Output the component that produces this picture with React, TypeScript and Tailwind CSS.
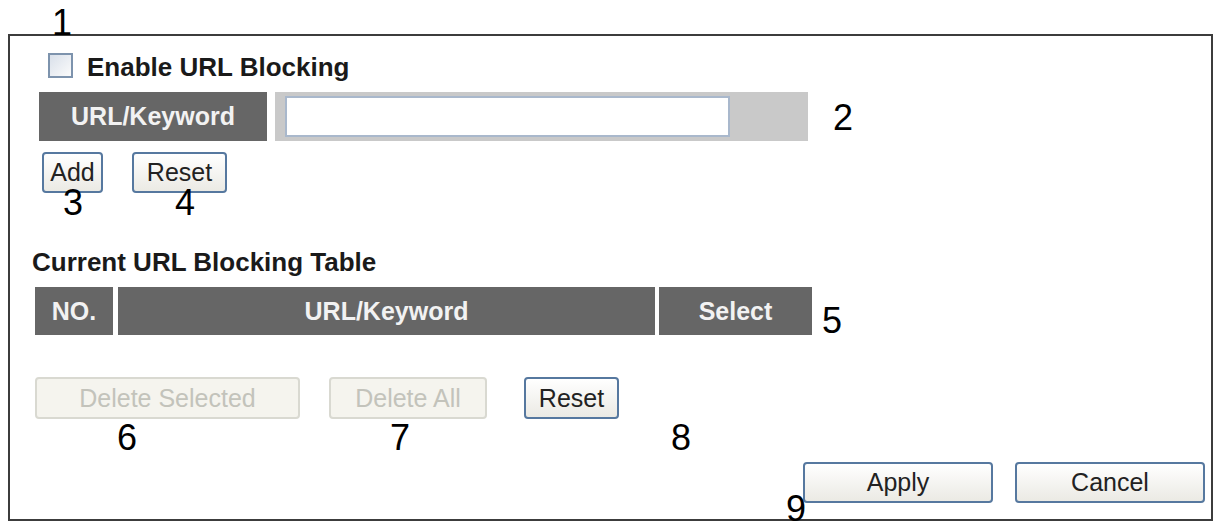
import React from "react";

const font = { fontFamily: '"Liberation Sans", Arial, sans-serif' };

function Btn({ children, w, disabled, className = "" }: { children: React.ReactNode; w: string; disabled?: boolean; className?: string }) {
  if (disabled) {
    return (
      <div
        className={`${w} h-full flex items-center justify-center rounded-[4px] border-2 border-[#d9d9d1] bg-[#f5f4ee] text-[25px] leading-none text-[#c3c3bb] ${className}`}
      >
        {children}
      </div>
    );
  }
  return (
    <div
      className={`${w} h-full flex items-center justify-center rounded-[4px] border-2 border-[#56789f] bg-gradient-to-b from-[#ffffff] to-[#ebeae4] text-[25px] leading-none text-[#222222] ${className}`}
    >
      {children}
    </div>
  );
}

const numbers: { n: string; left: number; top: number }[] = [
  { n: "1", left: 52, top: 8 },
  { n: "2", left: 833, top: 103 },
  { n: "3", left: 63, top: 188 },
  { n: "4", left: 175, top: 188 },
  { n: "5", left: 822, top: 306 },
  { n: "6", left: 117, top: 423 },
  { n: "7", left: 390, top: 423 },
  { n: "8", left: 671, top: 423 },
  { n: "9", left: 786, top: 494 },
];

export default function App() {
  return (
    <div className="relative w-[1221px] h-[526px] bg-white overflow-hidden" style={font}>
      <div className="ml-[8px] pt-[34px]">
        <div className="w-[1205px] h-[487px] border-2 border-[#3c3c3c] flex flex-col">
          {/* Row 1 */}
          <div className="mt-[17px] h-[25px] flex items-center">
            <div className="ml-[38px] w-[25px] h-[25px] border-2 border-[#7d93ad] bg-gradient-to-br from-[#d9e0ea] to-[#fbfbfb]" />
            <div className="ml-[14px] mt-[2px] text-[26px] font-bold leading-none text-[#1a1a1a]">Enable URL Blocking</div>
          </div>
          {/* Row 2 */}
          <div className="mt-[14px] h-[49px] flex">
            <div className="ml-[29px] w-[228px] h-full bg-[#666666] flex items-center justify-center text-[25px] font-bold text-[#f2f2f2] leading-none">
              URL/Keyword
            </div>
            <div className="ml-[8px] w-[533px] h-full bg-[#c9c9c9] flex items-center pl-[10px]">
              <div className="w-[445px] h-[41px] border-2 border-[#a9b8cc] bg-white" />
            </div>
          </div>
          {/* Row 3 */}
          <div className="mt-[11px] h-[41px] flex">
            <Btn w="w-[61px]" className="ml-[32px]">Add</Btn>
            <Btn w="w-[95px]" className="ml-[29px]">Reset</Btn>
          </div>
          {/* Row 4 */}
          <div className="mt-[54px] h-[30px] flex items-center">
            <div className="ml-[22px] text-[26px] font-bold leading-none text-[#1a1a1a]">Current URL Blocking Table</div>
          </div>
          {/* Row 5 */}
          <div className="mt-[10px] h-[48px] flex">
            <div className="ml-[25px] w-[78px] h-full bg-[#666666] flex items-center justify-center text-[25px] font-bold text-[#f2f2f2] leading-none">
              NO.
            </div>
            <div className="ml-[5px] w-[537px] h-full bg-[#666666] flex items-center justify-center text-[25px] font-bold text-[#f2f2f2] leading-none">
              URL/Keyword
            </div>
            <div className="ml-[4px] w-[153px] h-full bg-[#666666] flex items-center justify-center text-[25px] font-bold text-[#f2f2f2] leading-none">
              Select
            </div>
          </div>
          {/* Row 6 */}
          <div className="mt-[42px] h-[42px] flex">
            <Btn w="w-[265px]" disabled className="ml-[25px]">Delete Selected</Btn>
            <Btn w="w-[158px]" disabled className="ml-[29px]">Delete All</Btn>
            <Btn w="w-[95px]" className="ml-[37px]">Reset</Btn>
          </div>
          {/* Row 7 */}
          <div className="mt-[43px] h-[41px] flex justify-end pr-[6px]">
            <Btn w="w-[190px]">Apply</Btn>
            <Btn w="w-[190px]" className="ml-[22px]">Cancel</Btn>
          </div>
        </div>
      </div>
      {numbers.map((d) => (
        <div
          key={d.n}
          className="absolute text-[36px] leading-[30px] text-black"
          style={{ left: d.left, top: d.top }}
        >
          {d.n}
        </div>
      ))}
    </div>
  );
}
